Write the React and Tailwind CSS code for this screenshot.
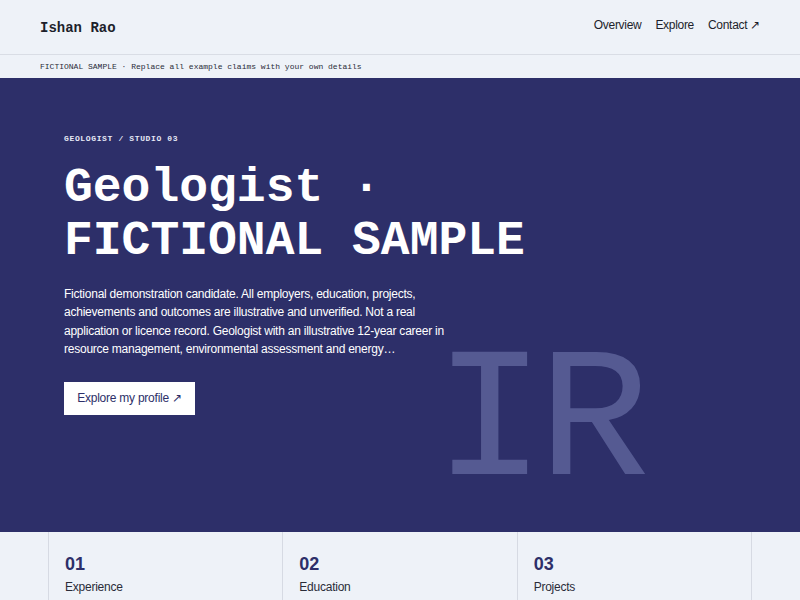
export default function App() {
  const mono = { fontFamily: '"Liberation Mono", "Courier New", monospace' };
  const sans = { fontFamily: '"Liberation Sans", Arial, sans-serif' };
  return (
    <div className="w-[800px] h-[600px] overflow-hidden bg-[#eef2f8]" style={sans}>
      <header className="h-[55px] flex items-center justify-between px-10 border-b border-[#d9dde5]">
        <div className="pt-[3px] text-[14px] font-bold text-[#1d1f2b]" style={mono}>Ishan Rao</div>
        <nav className="flex items-center gap-[14px] text-[12px] tracking-[-0.025em] text-[#1d1f2b] pb-[5px]">
          <span>Overview</span>
          <span>Explore</span>
          <span>Contact ↗</span>
        </nav>
      </header>
      <div className="h-[23px] flex items-center px-10 text-[8px] text-[#2a2c38]" style={mono}>
        FICTIONAL SAMPLE · Replace all example claims with your own details
      </div>
      <section className="relative h-[454px] bg-[#2d2f69] overflow-hidden px-16 pt-[55px]">
        <div className="absolute left-[434px] top-[254px] text-[186px] leading-none tracking-[-0.04em] text-[#555a92] select-none" style={mono}>IR</div>
        <div className="relative">
          <div className="text-[8px] font-bold tracking-[0.08em] text-[#e6e8f5]" style={mono}>GEOLOGIST / STUDIO 03</div>
          <h1 className="mt-[17px] w-[560px] text-[48px] font-bold leading-[53px] text-white" style={mono}>Geologist · FICTIONAL SAMPLE</h1>
          <p className="mt-[17px] w-[385px] text-[12px] tracking-[-0.02em] leading-[18.4px] text-white">
            Fictional demonstration candidate. All employers, education, projects, achievements and outcomes are illustrative and unverified. Not a real application or licence record. Geologist with an illustrative 12-year career in resource management, environmental assessment and energy…
          </p>
          <button className="mt-[23px] h-[33px] w-[131px] bg-white text-[12px] tracking-[-0.02em] text-[#2d2f69]">Explore my profile ↗</button>
        </div>
      </section>
      <div className="mx-12 grid grid-cols-3 border-l border-[#d6dae3]">
        {[["01", "Experience"], ["02", "Education"], ["03", "Projects"]].map(([n, l]) => (
          <div key={n} className="border-r border-[#d6dae3] px-4 pt-[20px] h-[80px]">
            <div className="text-[18px] font-bold text-[#2d2f69] leading-[24px]">{n}</div>
            <div className="mt-[2px] text-[12px] tracking-[-0.02em] text-[#2a2c38]">{l}</div>
          </div>
        ))}
      </div>
    </div>
  );
}
